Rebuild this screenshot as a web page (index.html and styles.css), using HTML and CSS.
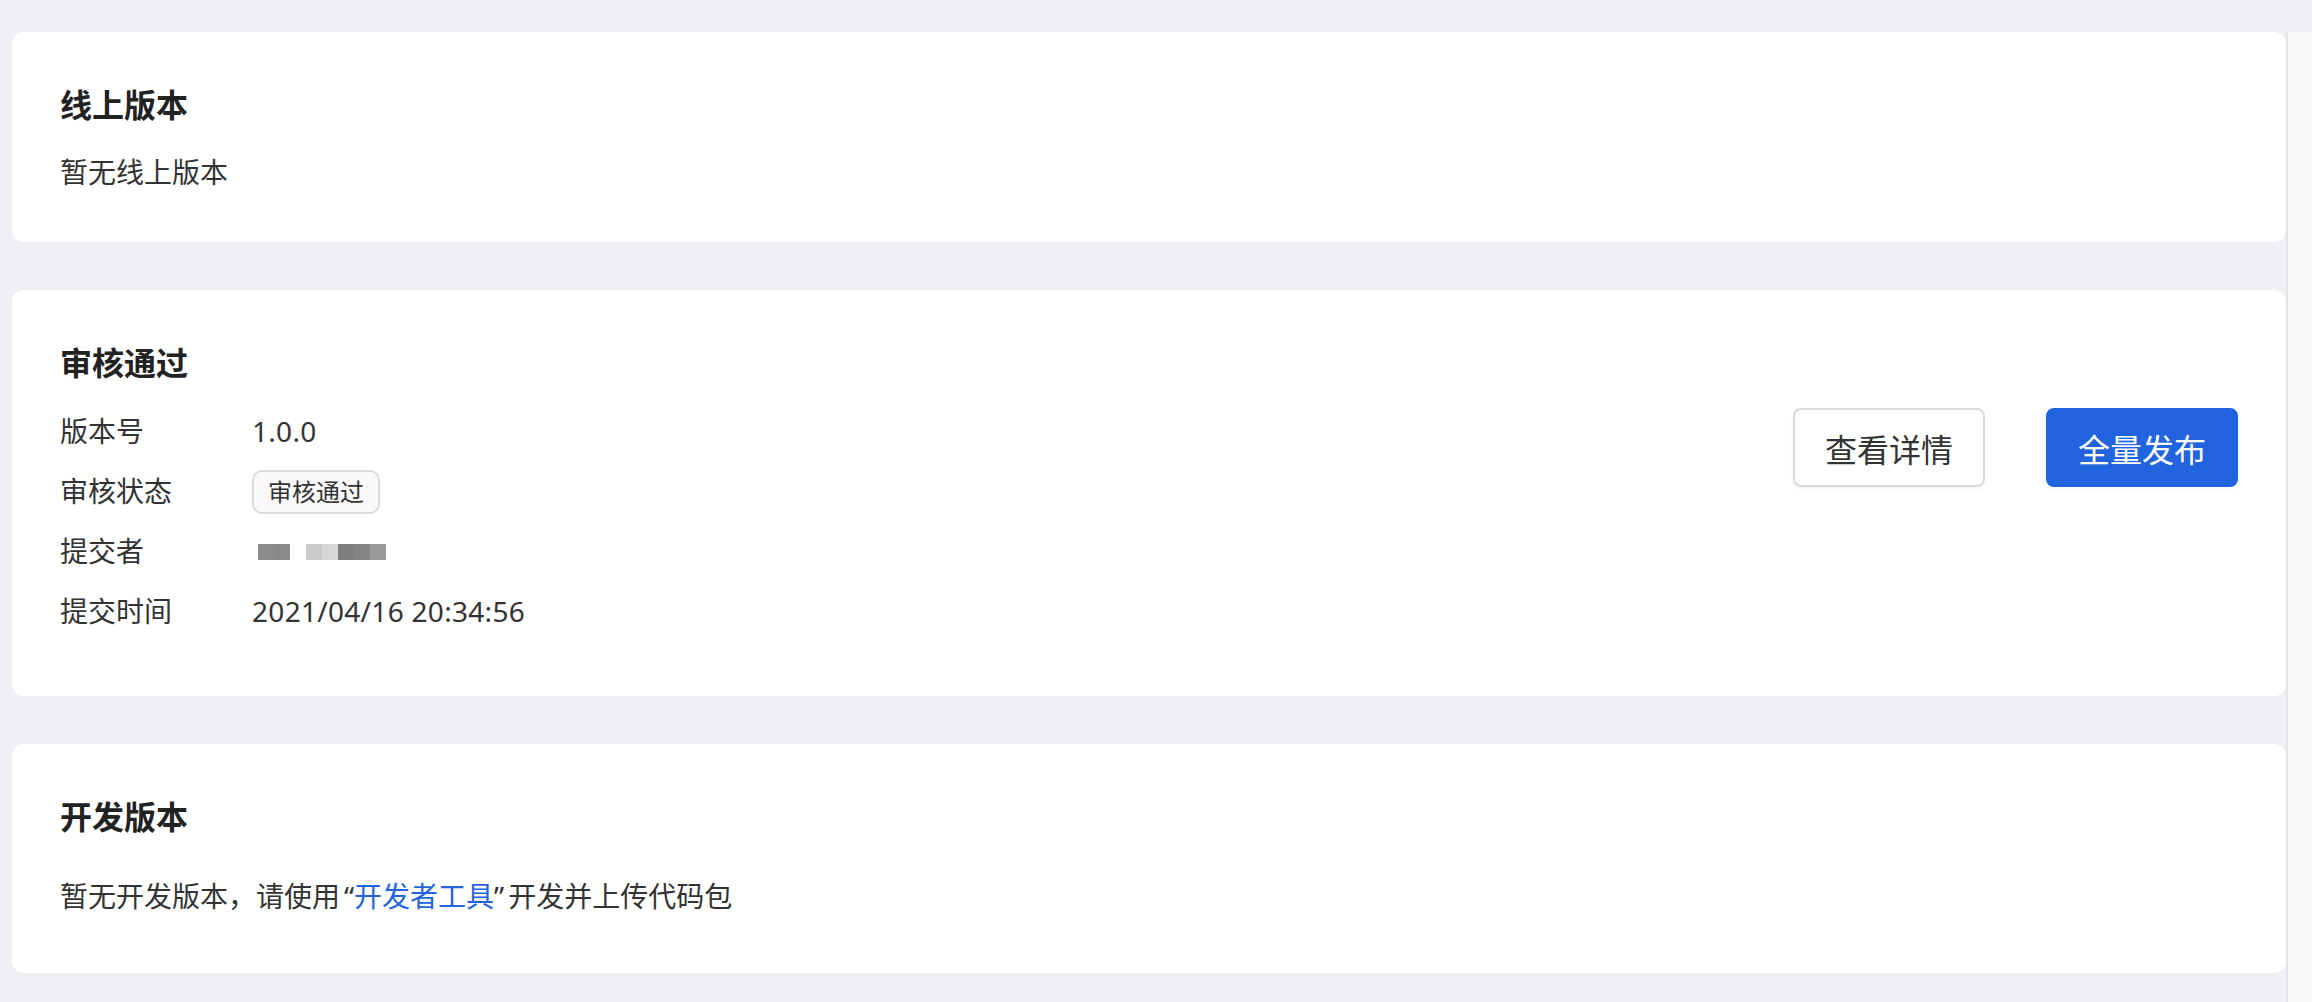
FILE: index.html
```html
<!DOCTYPE html>
<html lang="zh-CN">
<head>
    <meta charset="UTF-8">
    <meta name="viewport" content="width=device-width, initial-scale=1.0">
    <title>版本管理</title>
    <link rel="stylesheet" href="styles.css">
</head>
<body>
    <div class="page">
        <main class="content">
            <!-- Online version -->
            <section class="card card-online">
                <h2 class="card-title">线上版本</h2>
                <p class="card-text">暂无线上版本</p>
            </section>

            <!-- Review version -->
            <section class="card card-review">
                <div class="review-info">
                    <h2 class="card-title">审核通过</h2>
                    <dl class="info-list">
                        <div class="info-row">
                            <dt>版本号</dt>
                            <dd class="value">1.0.0</dd>
                        </div>
                        <div class="info-row">
                            <dt>审核状态</dt>
                            <dd><span class="tag">审核通过</span></dd>
                        </div>
                        <div class="info-row">
                            <dt>提交者</dt>
                            <dd>
                                <span class="mosaic">
                                    <span class="mosaic-group">
                                        <i class="cell c1"></i><i class="cell c2"></i>
                                    </span>
                                    <span class="mosaic-group">
                                        <i class="cell c3"></i><i class="cell c4"></i><i class="cell c5"></i><i class="cell c6"></i><i class="cell c7"></i>
                                    </span>
                                </span>
                            </dd>
                        </div>
                        <div class="info-row">
                            <dt>提交时间</dt>
                            <dd class="value">2021/04/16 20:34:56</dd>
                        </div>
                    </dl>
                </div>
                <div class="review-actions">
                    <button type="button" class="btn">查看详情</button>
                    <button type="button" class="btn btn-primary">全量发布</button>
                </div>
            </section>

            <!-- Dev version -->
            <section class="card card-dev">
                <h2 class="card-title">开发版本</h2>
                <p class="card-text">暂无开发版本，请使用<span class="quote-open">“</span><a href="#" class="link">开发者工具</a><span class="quote-close">”</span>开发并上传代码包</p>
            </section>
        </main>
        <div class="scroll-track"></div>
    </div>
</body>
</html>
```

FILE: styles.css
```css
body {
    margin: 0;
    font-family: "Noto Sans", "Noto Sans CJK SC", sans-serif;
    color: #333;
    background-color: #eff0f4;
}

.page {
    display: flex;
    min-height: 1002px;
}

.content {
    flex: 1;
    display: flex;
    flex-direction: column;
    gap: 48px;
    padding: 32px 0 0 12px;
}

.scroll-track {
    width: 24px;
    margin-top: 32px;
    border-left: 2px solid #e4e4e4;
    background-color: #f8f8f8;
}

.card {
    background-color: #fff;
    border-radius: 12px;
    padding: 49px 48px 50px;
}

.card-title {
    margin: 0 0 23px;
    font-size: 32px;
    line-height: 48px;
    font-weight: 600;
    color: #222;
}

.card-text {
    margin: 0;
    font-size: 28px;
    line-height: 40px;
}

/* review card */
.card-review {
    display: flex;
    justify-content: space-between;
    align-items: flex-start;
    padding-bottom: 65px;
}

.card-review .card-title {
    margin-bottom: 24px;
}

.info-list {
    margin: 0;
    display: flex;
    flex-direction: column;
    gap: 20px;
}

.info-row {
    display: flex;
    align-items: center;
    height: 40px;
    font-size: 28px;
    line-height: 40px;
}

.info-row dt {
    width: 192px;
}

.info-row dd {
    margin: 0;
}

.value {
    letter-spacing: 0.3px;
}

.tag {
    display: inline-block;
    box-sizing: border-box;
    height: 44px;
    padding: 0 14px;
    border: 2px solid #dadada;
    border-radius: 10px;
    background-color: #f9f9f9;
    font-size: 24px;
    line-height: 40px;
    vertical-align: middle;
}

.mosaic {
    display: flex;
    gap: 16px;
    margin-left: 6px;
    padding-top: 2px;
}

.mosaic-group {
    display: flex;
}

.cell {
    width: 16px;
    height: 16px;
}

.c1 { background-color: #8c8c8c; }
.c2 { background-color: #898989; }
.c3 { background-color: #cbcbcb; }
.c4 { background-color: #d7d7d7; }
.c5 { background-color: #7e7e7e; }
.c6 { background-color: #858585; }
.c7 { background-color: #9b9b9b; }

.review-actions {
    display: flex;
    gap: 61px;
    margin-top: 69px;
}

.btn {
    box-sizing: border-box;
    width: 192px;
    height: 79px;
    border: 2px solid #dadada;
    border-radius: 8px;
    background-color: #fff;
    color: #333;
    font-family: inherit;
    font-size: 32px;
    cursor: pointer;
    box-shadow: 0 2px 4px rgba(0, 0, 0, 0.04);
}

.btn-primary {
    border-color: #2264e0;
    background-color: #2264e0;
    color: #fff;
}

/* dev card */
.card-dev {
    padding-bottom: 57px;
}

.card-dev .card-title {
    margin-bottom: 35px;
}

.quote-open {
    margin-left: 4px;
}

.quote-close {
    margin-right: 4px;
}

.link {
    color: #2264e0;
    text-decoration: none;
}
```
